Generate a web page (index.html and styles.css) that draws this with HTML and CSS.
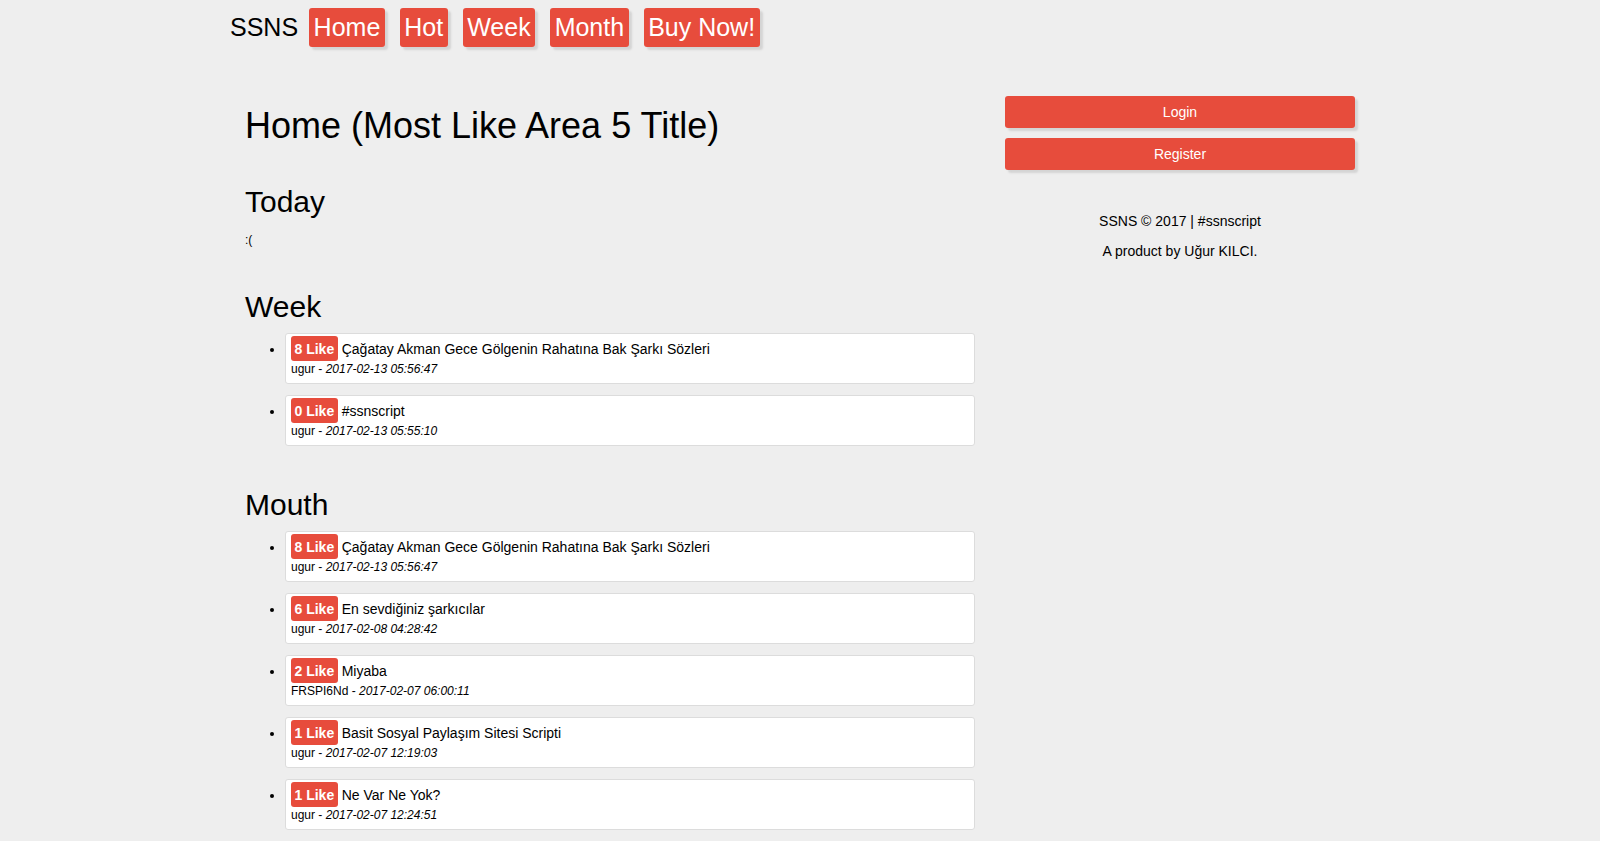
FILE: index.html
```html
<!DOCTYPE html>
<html lang="tr">
<head>
<meta charset="utf-8">
<title>SSNS</title>
<link rel="stylesheet" href="styles.css">
</head>
<body>
<div class="container">
  <header class="nav">
    <span class="brand">SSNS</span>
    <a class="nav-btn" href="#">Home</a>
    <a class="nav-btn" href="#">Hot</a>
    <a class="nav-btn" href="#">Week</a>
    <a class="nav-btn" href="#">Month</a>
    <a class="nav-btn" href="#">Buy Now!</a>
  </header>
  <div class="row">
    <main class="col-main">
      <h1 class="page-title">Home (Most Like Area 5 Title)</h1>
      <h2 class="sec-title first">Today</h2>
      <p class="empty">:(</p>
      <h2 class="sec-title">Week</h2>
      <ul class="posts">
        <li><div class="card"><div class="line1"><span class="badge">8 Like</span><span class="ttl">Çağatay Akman Gece Gölgenin Rahatına Bak Şarkı Sözleri</span></div><div class="meta">ugur - <em>2017-02-13 05:56:47</em></div></div></li>
        <li><div class="card"><div class="line1"><span class="badge">0 Like</span><span class="ttl">#ssnscript</span></div><div class="meta">ugur - <em>2017-02-13 05:55:10</em></div></div></li>
      </ul>
      <h2 class="sec-title">Mouth</h2>
      <ul class="posts last">
        <li><div class="card"><div class="line1"><span class="badge">8 Like</span><span class="ttl">Çağatay Akman Gece Gölgenin Rahatına Bak Şarkı Sözleri</span></div><div class="meta">ugur - <em>2017-02-13 05:56:47</em></div></div></li>
        <li><div class="card"><div class="line1"><span class="badge">6 Like</span><span class="ttl">En sevdiğiniz şarkıcılar</span></div><div class="meta">ugur - <em>2017-02-08 04:28:42</em></div></div></li>
        <li><div class="card"><div class="line1"><span class="badge">2 Like</span><span class="ttl">Miyaba</span></div><div class="meta">FRSPI6Nd - <em>2017-02-07 06:00:11</em></div></div></li>
        <li><div class="card"><div class="line1"><span class="badge">1 Like</span><span class="ttl">Basit Sosyal Paylaşım Sitesi Scripti</span></div><div class="meta">ugur - <em>2017-02-07 12:19:03</em></div></div></li>
        <li><div class="card"><div class="line1"><span class="badge">1 Like</span><span class="ttl">Ne Var Ne Yok?</span></div><div class="meta">ugur - <em>2017-02-07 12:24:51</em></div></div></li>
      </ul>
    </main>
    <aside class="col-side">
      <a class="side-btn" href="#">Login</a>
      <a class="side-btn" href="#">Register</a>
      <div class="footer">
        <p>SSNS © 2017 | #ssnscript</p>
        <p>A product by Uğur KILCI.</p>
      </div>
    </aside>
  </div>
</div>
</body>
</html>
```
FILE: styles.css
```css
html, body {
  margin: 0;
  padding: 0;
  background: #eeeeee;
}
body {
  font-family: "Liberation Sans", Arial, sans-serif;
  color: #000;
  font-size: 14px;
}
.container {
  width: 1140px;
  margin: 0 auto;
}
.nav {
  display: flex;
  align-items: baseline;
  padding-top: 8px;
  gap: 15px;
}
.brand {
  font-size: 25px;
  line-height: 29px;
  margin-right: -4px;
}
.nav-btn {
  display: block;
  font-size: 25px;
  line-height: 29px;
  padding: 5px 4.5px;
  background: #e74c3c;
  color: #fff;
  text-decoration: none;
  border-radius: 3px;
  box-shadow: 3px 3px 2px #d4d4d4;
}
.row {
  display: flex;
  margin-top: 49px;
}
.col-main {
  width: 730px;
  padding: 0 15px;
}
.col-side {
  width: 350px;
  padding: 0 15px;
}
.page-title {
  font-size: 36px;
  line-height: 40px;
  font-weight: normal;
  margin: 10px 0 0;
}
.sec-title {
  font-size: 30px;
  line-height: 31px;
  font-weight: normal;
  margin: 43px 0 0;
}
.sec-title.first {
  margin-top: 40px;
}
.empty {
  font-size: 12px;
  line-height: 16px;
  margin: 15px 0 0;
}
.posts {
  list-style: disc;
  margin: 11px 0 32px;
  padding-left: 40px;
}
.posts.last {
  margin-bottom: 0;
}
.posts li {
  margin-bottom: 11px;
}
.posts.last li:last-child {
  margin-bottom: 0;
}
.card {
  background: #fff;
  border: 1px solid #dcdcdc;
  border-radius: 3px;
  padding: 2px 5px 7px;
}
.line1 {
  display: flex;
  align-items: baseline;
  height: 26px;
}
.badge {
  display: block;
  background: #e74c3c;
  color: #fff;
  font-weight: bold;
  font-size: 14px;
  line-height: 16px;
  padding: 5px 3.5px 4px;
  border-radius: 3px;
  margin-right: 4px;
}
.ttl {
  font-size: 14px;
  line-height: 20px;
}
.meta {
  font-size: 12px;
  line-height: 14px;
}
.meta em {
  font-style: italic;
}
.side-btn {
  display: block;
  height: 32px;
  line-height: 32px;
  text-align: center;
  background: #e74c3c;
  color: #fff;
  text-decoration: none;
  font-size: 14px;
  border-radius: 3px;
  box-shadow: 3px 3px 2px #d4d4d4;
  margin-bottom: 10px;
}
.footer {
  margin-top: 36px;
  text-align: center;
}
.footer p {
  margin: 0;
  line-height: 30px;
  font-size: 14px;
}
```
